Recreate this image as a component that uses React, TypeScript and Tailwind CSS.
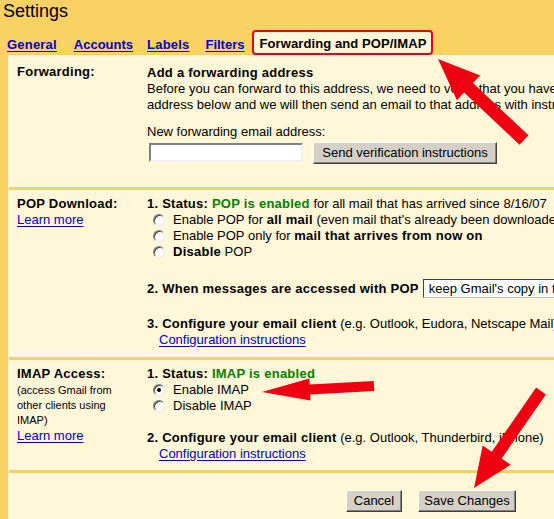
import React from "react";

const font = { fontFamily: '"Liberation Sans", Arial, sans-serif' };

// polygon for a straight arrow from tail to tip
function arrowPoints(
  tx: number,
  ty: number,
  px: number,
  py: number,
  sw: number,
  hl: number,
  hw: number
) {
  const dx = px - tx;
  const dy = py - ty;
  const len = Math.hypot(dx, dy);
  const ux = dx / len;
  const uy = dy / len;
  const nx = -uy;
  const ny = ux;
  const bx = px - ux * hl;
  const by = py - uy * hl;
  const pts = [
    [tx + (nx * sw) / 2, ty + (ny * sw) / 2],
    [bx + (nx * sw) / 2, by + (ny * sw) / 2],
    [bx + (nx * hw) / 2, by + (ny * hw) / 2],
    [px, py],
    [bx - (nx * hw) / 2, by - (ny * hw) / 2],
    [bx - (nx * sw) / 2, by - (ny * sw) / 2],
    [tx - (nx * sw) / 2, ty - (ny * sw) / 2],
  ];
  return pts.map((p) => p.map((v) => v.toFixed(1)).join(",")).join(" ");
}

function B({ children, className = "" }: { children: React.ReactNode; className?: string }) {
  return <b className={`font-bold tracking-[0.25px] ${className}`}>{children}</b>;
}

function Radio({ checked = false }: { checked?: boolean }) {
  return (
    <span className="relative inline-block w-[12px] h-[12px] rounded-full bg-white border border-t-[#808080] border-l-[#808080] border-r-[#e8e8e8] border-b-[#e8e8e8] shadow-[inset_1px_1px_0_#404040] mr-[8px] shrink-0">
      {checked && (
        <span className="absolute left-[3px] top-[3px] w-[4px] h-[4px] rounded-full bg-black" />
      )}
    </span>
  );
}

function Btn({ children, className = "" }: { children: React.ReactNode; className?: string }) {
  return (
    <div
      className={`h-[22px] flex items-center justify-center bg-[#d4d0c8] border border-t-white border-l-white border-r-[#404040] border-b-[#404040] shadow-[inset_-1px_-1px_0_#808080] text-[13px] text-black ${className}`}
    >
      {children}
    </div>
  );
}

function Link({ children }: { children: React.ReactNode }) {
  return <span className="text-[#0000cc] underline underline-offset-[2px]">{children}</span>;
}

function Sep() {
  return <div className="h-[3px] bg-[#f5cf6a] ml-[1px]" />;
}

function Tab({ children, className = "" }: { children: React.ReactNode; className?: string }) {
  return (
    <div className={`flex items-center pt-[4px] text-[#0000cc] underline underline-offset-[2px] ${className}`}>
      {children}
    </div>
  );
}

export default function App() {
  return (
    <div
      className="relative w-[554px] h-[519px] overflow-hidden bg-[#fad163] text-black text-[13px] leading-[16px]"
      style={font}
    >
      <div className="h-[30px] pl-[3px] pt-[1px] text-[18px] leading-[20px]">Settings</div>

      <div className="flex items-stretch h-[25px] pl-[7px] font-bold text-[13px]">
        <Tab className="tracking-[0.2px]">General</Tab>
        <Tab className="ml-[17px]">Accounts</Tab>
        <Tab className="ml-[14px] tracking-[0.2px]">Labels</Tab>
        <Tab className="ml-[16px]">Filters</Tab>
        <div className="ml-[8px] px-[5px] flex items-center bg-[#fff7d7] border-2 border-[#e8001c] rounded-[4px] whitespace-nowrap pt-[2px] tracking-[0.1px]">
          Forwarding and POP/IMAP
        </div>
      </div>

      <div className="ml-[8px] bg-[#fff7d7] h-[464px] whitespace-nowrap">
        {/* Forwarding */}
        <div className="grid grid-cols-[139px_1fr] pt-[9px] pb-[24px]">
          <div className="pl-[9px]">
            <B>Forwarding:</B>
          </div>
          <div>
            <div className="leading-[17px]">
              <B>Add a forwarding address</B>
            </div>
            <div>Before you can forward to this address, we need to verify that you have</div>
            <div>address below and we will then send an email to that address with instructions</div>
            <div className="mt-[11px]">New forwarding email address:</div>
            <div className="flex items-center mt-[2px] h-[21px]">
              <div className="ml-[2px] w-[154px] h-[19px] bg-white border-2 border-t-[#808080] border-l-[#808080] border-r-[#f0f0f0] border-b-[#f0f0f0]" />
              <Btn className="ml-[10px] w-[184px] h-[21px]">Send verification instructions</Btn>
            </div>
          </div>
        </div>
        <Sep />

        {/* POP */}
        <div className="grid grid-cols-[139px_1fr] pt-[6px] pb-[9px]">
          <div className="pl-[9px]">
            <div>
              <B>POP Download:</B>
            </div>
            <Link>Learn more</Link>
          </div>
          <div>
            <div>
              <B>1. Status: </B>
              <B className="text-[#008000]">POP is enabled</B> for all mail that has arrived since 8/16/07
            </div>
            <div className="flex items-center pl-[6px]">
              <Radio />
              <span>
                Enable POP for <B>all mail</B> (even mail that's already been downloaded)
              </span>
            </div>
            <div className="flex items-center pl-[6px]">
              <Radio />
              <span>
                Enable POP only for <B>mail that arrives from now on</B>
              </span>
            </div>
            <div className="flex items-center pl-[6px]">
              <Radio />
              <span>
                <B>Disable</B> POP
              </span>
            </div>
            <div className="flex items-center mt-[19px] h-[19px]">
              <B>2. When messages are accessed with POP</B>
              <div className="ml-[4px] h-[19px] w-[200px] bg-white border border-t-[#404040] border-l-[#404040] border-r-[#c0c0c0] border-b-[#c0c0c0] pl-[5px] flex items-center">
                keep Gmail's copy in the Inbox
              </div>
            </div>
            <div className="mt-[18px]">
              <B>3. Configure your email client</B> (e.g. Outlook, Eudora, Netscape Mail)
            </div>
            <div className="pl-[12px]">
              <Link>Configuration instructions</Link>
            </div>
          </div>
        </div>
        <Sep />

        {/* IMAP */}
        <div className="grid grid-cols-[139px_1fr] pt-[6px] pb-[8px]">
          <div className="pl-[9px]">
            <div>
              <B>IMAP Access:</B>
            </div>
            <div className="text-[11px] leading-[15px] mt-[1px]">
              (access Gmail from
              <br />
              other clients using
              <br />
              IMAP)
            </div>
            <Link>Learn more</Link>
          </div>
          <div>
            <div>
              <B>1. Status: </B>
              <B className="text-[#008000]">IMAP is enabled</B>
            </div>
            <div className="flex items-center pl-[6px]">
              <Radio checked />
              <span>Enable IMAP</span>
            </div>
            <div className="flex items-center pl-[6px]">
              <Radio />
              <span>Disable IMAP</span>
            </div>
            <div className="mt-[16px]">
              <B>2. Configure your email client</B> (e.g. Outlook, Thunderbird, iPhone)
            </div>
            <div className="pl-[12px]">
              <Link>Configuration instructions</Link>
            </div>
          </div>
        </div>
        <Sep />

        <div className="flex pl-[338px] pt-[17px] gap-[16px]">
          <Btn className="w-[56px]">Cancel</Btn>
          <Btn className="w-[98px]">Save Changes</Btn>
        </div>
      </div>

      {/* annotation arrows */}
      <svg className="absolute inset-0 pointer-events-none" width="554" height="519">
        <polygon points={arrowPoints(524, 140, 438, 59, 13, 42, 34)} fill="#ee0011" />
        <polygon points={arrowPoints(374, 386, 262, 392, 10, 48, 22)} fill="#ee0011" />
        <polygon points={arrowPoints(541, 391, 474, 488, 12, 40, 34)} fill="#ee0011" />
      </svg>
    </div>
  );
}
